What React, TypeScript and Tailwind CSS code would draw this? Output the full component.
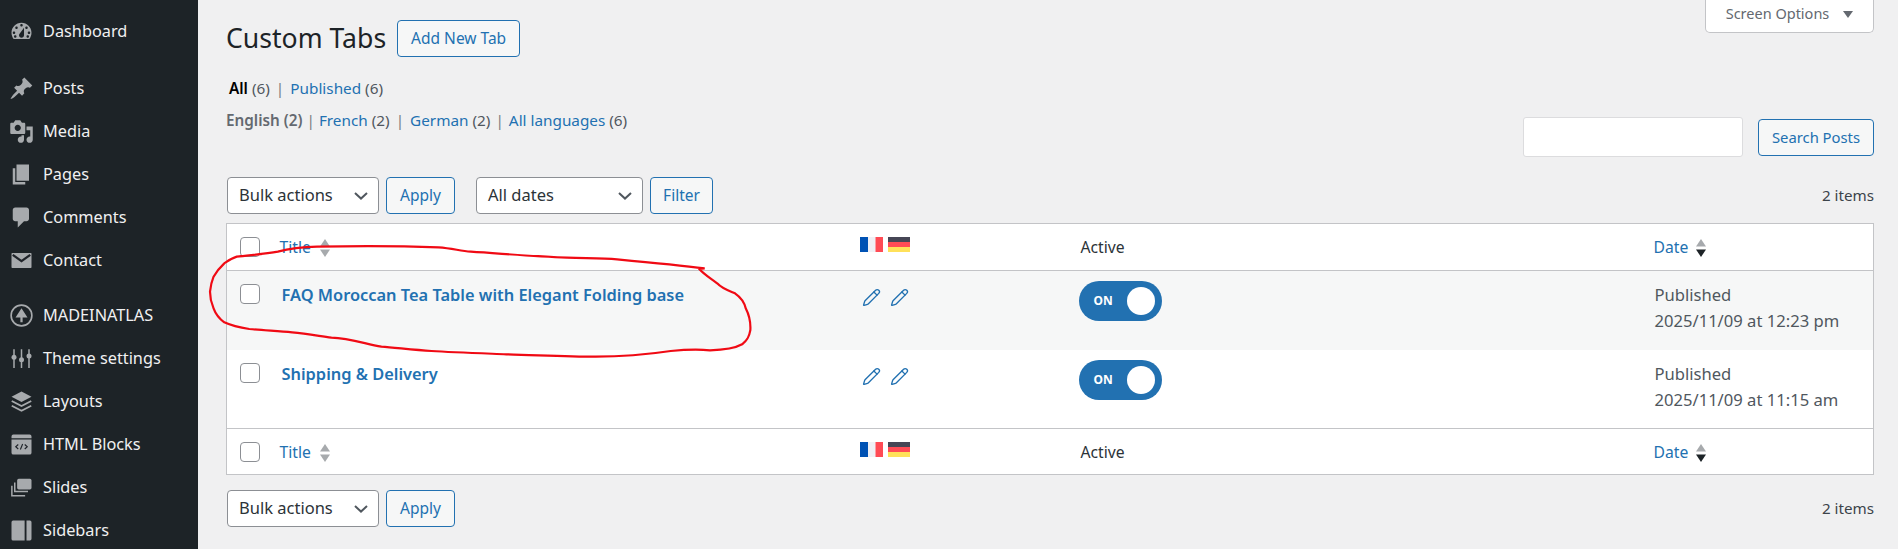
import { Pencil } from "lucide-react";
import type { ReactNode } from "react";

const ic = "w-[25px] h-[25px] shrink-0 fill-[#a7aaad]";

const Svg = ({ children }: { children: ReactNode }) => (
  <svg viewBox="0 0 20 20" className={ic}>{children}</svg>
);

const icons: Record<string, ReactNode> = {
  dashboard: <Svg><path fillRule="evenodd" d="M3.76 16h12.48c1.1-1.37 1.76-3.11 1.76-5 0-4.42-3.58-8-8-8s-8 3.58-8 8c0 1.89.66 3.63 1.76 5zM10 4c.55 0 1 .45 1 1s-.45 1-1 1-1-.45-1-1 .45-1 1-1zM6 6c.55 0 1 .45 1 1s-.45 1-1 1-1-.45-1-1 .45-1 1-1zm8 0c.55 0 1 .45 1 1s-.45 1-1 1-1-.45-1-1 .45-1 1-1zm-5.37 5.55L12 7v6c0 1.1-.9 2-2 2s-2-.9-2-2c0-.57.24-1.08.63-1.45zM4 10c.55 0 1 .45 1 1s-.45 1-1 1-1-.45-1-1 .45-1 1-1zm12 0c.55 0 1 .45 1 1s-.45 1-1 1-1-.45-1-1 .45-1 1-1zM5 13c.55 0 1 .45 1 1s-.45 1-1 1-1-.45-1-1 .45-1 1-1zm10 0c.55 0 1 .45 1 1s-.45 1-1 1-1-.45-1-1 .45-1 1-1z" /></Svg>,
  posts: <Svg><path d="M10.44 3.02l1.82-1.82 6.36 6.35-1.83 1.82c-1.05-.68-2.48-.57-3.41.36l-.75.75c-.92.93-1.04 2.35-.35 3.41l-1.83 1.82-2.41-2.41-2.8 2.79c-.42.42-3.38 2.71-3.8 2.29s1.86-3.39 2.28-3.81l2.79-2.79L4.1 9.36l1.83-1.82c1.05.69 2.48.57 3.4-.36l.75-.75c.93-.92 1.05-2.35.36-3.41z" /></Svg>,
  media: <Svg><path fillRule="evenodd" d="M13 11V4c0-.55-.45-1-1-1h-1.67L9 1H5L3.67 3H2c-.55 0-1 .45-1 1v7c0 .55.45 1 1 1h10c.55 0 1-.45 1-1zM7 4.5c1.38 0 2.5 1.12 2.5 2.5S8.38 9.5 7 9.5 4.5 8.38 4.5 7 5.62 4.5 7 4.5zM14 6h5v10.5c0 1.38-1.12 2.5-2.5 2.5S14 17.88 14 16.5s1.12-2.5 2.5-2.5c.17 0 .34.02.5.05V9h-3V6zm-4 8.05V13h2v3.5c0 1.38-1.12 2.5-2.5 2.5S7 17.88 7 16.5 8.12 14 9.5 14c.17 0 .34.02.5.05z" /></Svg>,
  pages: <Svg><path d="M6 15V2h10v13H6zm-1 1h8v2H3V5h2v11z" /></Svg>,
  comments: <Svg><path d="M5 2h9c1.1 0 2 .9 2 2v7c0 1.1-.9 2-2 2h-2l-5 5v-5H5c-1.1 0-2-.9-2-2V4c0-1.1.9-2 2-2z" /></Svg>,
  contact: (
    <Svg>
      <rect x="2" y="4" width="16" height="12" rx="0.6" />
      <path d="M3 5.5l7 5 7-5" fill="none" stroke="#1f2329" strokeWidth="1.8" />
    </Svg>
  ),
  atlas: (
    <Svg>
      <circle cx="10" cy="10" r="8.3" fill="none" stroke="#a7aaad" strokeWidth="1.3" />
      <path d="M10 4.2l4.8 7.4h-3.9v3.8H9.1v-3.8H5.2z" />
    </Svg>
  ),
  settings: (
    <Svg>
      <path d="M4 2.5v15M10 2.5v15M16 2.5v15" stroke="#a7aaad" strokeWidth="1.2" fill="none" />
      <circle cx="4" cy="9" r="2" />
      <circle cx="10" cy="11" r="2" />
      <circle cx="16" cy="8" r="2" />
    </Svg>
  ),
  layouts: (
    <Svg>
      <path d="M10 2l8 4.2-8 4.2-8-4.2z" />
      <path d="M2.2 9.6L10 13.6l7.8-4M2.2 13.4L10 17.4l7.8-4" fill="none" stroke="#a7aaad" strokeWidth="1.5" />
    </Svg>
  ),
  html: (
    <Svg>
      <path fillRule="evenodd" d="M3.5 2h13A1.5 1.5 0 0118 3.5V5H2V3.5A1.5 1.5 0 013.5 2zM2 6h16v10.5a1.5 1.5 0 01-1.5 1.5h-13A1.5 1.5 0 012 16.5z" />
      <path d="M7.4 10l-2 1.8 2 1.8M12.6 10l2 1.8-2 1.8M10.9 9.6l-1.8 4.4" fill="none" stroke="#1f2329" strokeWidth="0.9" />
    </Svg>
  ),
  slides: (
    <Svg>
      <rect x="6.5" y="3" width="11.5" height="8.5" rx="1.3" />
      <path d="M4.6 6v7.2h10.6M2.3 8.5v8h10.6" fill="none" stroke="#a7aaad" strokeWidth="1.2" />
    </Svg>
  ),
  sidebars: (
    <Svg>
      <path d="M3.3 2h9.2v16H3.3A1.3 1.3 0 012 16.7V3.3A1.3 1.3 0 013.3 2zM14 2h2.7A1.3 1.3 0 0118 3.3v13.4a1.3 1.3 0 01-1.3 1.3H14z" />
    </Svg>
  ),
};

const MenuItem = ({ icon, label }: { icon: string; label: string }) => (
  <div className="flex items-center h-[43px] pl-[9px] gap-[9px] text-[16.3px] text-[#f0f0f1] whitespace-nowrap">
    {icons[icon]}
    <span>{label}</span>
  </div>
);

const Chevron = () => (
  <svg viewBox="0 0 14 8" className="w-[14px] h-[8px] shrink-0" fill="none" stroke="#50575e" strokeWidth="2">
    <path d="M1 1l6 5.6L13 1" />
  </svg>
);

const SelectBox = ({ label, w }: { label: string; w: string }) => (
  <div className={`${w} h-[37px] flex items-center justify-between pl-[11px] pr-[10px] bg-white border border-[#8c8f94] rounded-[4px] text-[16.5px] text-[#2c3338]`}>
    <span>{label}</span>
    <Chevron />
  </div>
);

const Btn = ({ children, w, size = "text-[15.5px]" }: { children: ReactNode; w: string; size?: string }) => (
  <div className={`${w} h-[37px] flex items-center justify-center bg-[#f6f7f7] border border-[#2271b1] rounded-[4px] ${size} text-[#2271b1] whitespace-nowrap`}>
    {children}
  </div>
);

const Checkbox = () => (
  <div className="w-[20px] h-[20px] bg-white border border-[#8c8f94] rounded-[4px]" />
);

const Sort = ({ active }: { active?: boolean }) => (
  <svg viewBox="0 0 10 18" className="w-[10px] h-[18px] inline-block shrink-0">
    <path d="M5 0l5 7.5H0z" fill="#a7aaad" />
    <path d="M5 18l5-7.5H0z" fill={active ? "#1d2327" : "#a7aaad"} />
  </svg>
);

const Flags = () => (
  <div className="flex gap-[5px]">
    <svg viewBox="0 0 23 15" className="w-[23px] h-[15px]">
      <rect width="8" height="15" fill="#0052b4" />
      <rect x="8" width="7.5" height="15" fill="#f0f0f5" />
      <rect x="15.5" width="7.5" height="15" fill="#ff4b55" />
    </svg>
    <svg viewBox="0 0 22 15" className="w-[22px] h-[15px]">
      <rect width="22" height="5" fill="#464655" />
      <rect y="5" width="22" height="5" fill="#ff4b55" />
      <rect y="10" width="22" height="5" fill="#ffe15a" />
    </svg>
  </div>
);

const Toggle = () => (
  <div className="w-[83px] h-[40px] rounded-full bg-[#2271b1] flex items-center justify-between pl-[15px] pr-[7px]">
    <span className="text-[12px] font-bold text-white">ON</span>
    <span className="w-[28px] h-[28px] rounded-full bg-white" />
  </div>
);

const Pencils = () => (
  <div className="flex gap-[9px] pl-[2px]">
    <Pencil size={19} strokeWidth={1.7} color="#2271b1" />
    <Pencil size={19} strokeWidth={1.7} color="#2271b1" />
  </div>
);

const HeadRow = ({ foot }: { foot?: boolean }) => {
  const line = foot ? "" : "border-b border-[#c3c4c7]";
  return (
    <tr className={`${foot ? "h-[46px]" : "h-[47px]"} ${line} bg-white text-[15.7px]`}>
      <td className="pl-[13px] align-top pt-[13px]"><Checkbox /></td>
      <td className="pl-[9px] align-top pt-[12px]">
        <div className="flex items-center gap-[9px] text-[#2271b1]"><span>Title</span><Sort /></div>
      </td>
      <td className="pl-[11px] align-top pt-[13px]"><Flags /></td>
      <td className="pl-[11px] align-top pt-[12px] text-[#2c3338]">Active</td>
      <td className="pl-[9px] align-top pt-[12px]">
        <div className="flex items-center gap-[8px] text-[#2271b1]"><span>Date</span><Sort active /></div>
      </td>
    </tr>
  );
};

const Row = ({ title, time, alt }: { title: string; time: string; alt?: boolean }) => (
  <tr className={`h-[79px] ${alt ? "bg-[#f6f7f7]" : "bg-white"}`}>
    <td className="pl-[13px] align-top pt-[13px]"><Checkbox /></td>
    <td className="pl-[11px] align-top pt-[12px] text-[16.4px] font-semibold text-[#2271b1]">{title}</td>
    <td className="pl-[11px] align-top pt-[17px]"><Pencils /></td>
    <td className="pl-[9px] align-top pt-[10px]"><Toggle /></td>
    <td className="pl-[10px] align-top pt-[11px] text-[16.6px] leading-[26px] text-[#50575e]">
      Published
      <br />
      {time}
    </td>
  </tr>
);

const Scribble = () => (
  <svg
    viewBox="0 0 1568 450"
    preserveAspectRatio="none"
    className="absolute left-[210px] top-[215px] w-[560px] h-[150px] overflow-visible pointer-events-none"
    fill="none"
  >
    <path
      vectorEffect="non-scaling-stroke"
      stroke="#f00a14"
      strokeWidth="2.2"
      d="M300 95C400 93 560 94 640 97C680 100 700 108 730 110C820 116 900 124 1000 128C1060 130 1100 130 1140 133C1230 142 1310 150 1385 160L1370 162C1385 180 1400 188 1420 205C1435 222 1455 228 1470 235C1490 250 1497 265 1500 280C1512 305 1514 325 1513 345C1510 365 1505 375 1490 388C1470 400 1440 405 1400 406C1360 402 1330 404 1290 408C1240 416 1170 425 1080 425C1000 425 910 420 830 418C760 415 680 412 620 408C570 405 520 398 480 395C430 385 390 370 340 368C300 362 270 356 230 352C190 348 150 346 110 342C85 338 60 332 40 322C25 310 15 295 10 280C2 260 0 245 0 230C2 210 5 198 10 185C20 165 30 155 40 145C50 138 60 130 75 125C110 120 150 118 190 110C225 100 260 96 300 95Z"
    />
  </svg>
);

export default function App() {
  return (
    <div
      className="relative flex w-[1898px] h-[549px] overflow-hidden bg-[#f0f0f1] text-[15.5px] text-[#3c434a]"
      style={{ fontFamily: '"Noto Sans", sans-serif' }}
    >
      <aside className="w-[198px] shrink-0 bg-[#1d2327] pt-[10px]">
        <MenuItem icon="dashboard" label="Dashboard" />
        <div className="h-[14px]" />
        <MenuItem icon="posts" label="Posts" />
        <MenuItem icon="media" label="Media" />
        <MenuItem icon="pages" label="Pages" />
        <MenuItem icon="comments" label="Comments" />
        <MenuItem icon="contact" label="Contact" />
        <div className="h-[12px]" />
        <MenuItem icon="atlas" label="MADEINATLAS" />
        <MenuItem icon="settings" label="Theme settings" />
        <MenuItem icon="layouts" label="Layouts" />
        <MenuItem icon="html" label="HTML Blocks" />
        <MenuItem icon="slides" label="Slides" />
        <MenuItem icon="sidebars" label="Sidebars" />
      </aside>

      <main className="flex-1 min-w-0 pl-[28px] pr-[24px]">
        <div className="flex items-start justify-between">
          <div className="flex items-center gap-[11px] pt-[20px]">
            <h1 className="text-[26.6px] leading-[37px] text-[#1d2327]">Custom Tabs</h1>
            <Btn w="w-[123px]">Add New Tab</Btn>
          </div>
          <div className="w-[169px] h-[33px] pb-[4px] flex items-center justify-center gap-[14px] bg-white border border-t-0 border-[#c3c4c7] rounded-b-[5px] text-[14.5px] text-[#646970]">
            <span>Screen Options</span>
            <svg viewBox="0 0 10 7" className="w-[10px] h-[7px]"><path d="M0 0h10L5 7z" fill="#646970" /></svg>
          </div>
        </div>

        <div className="flex items-start justify-between">
          <div className="pt-[20px] text-[15.3px] leading-[22px] text-[#50575e]">
            <div className="pl-[3px]">
              <span className="font-semibold text-black">All</span> (6)
              <span className="text-[#787c82] mx-[6px]">|</span>
              <span className="text-[#2271b1]">Published</span> (6)
            </div>
            <div className="mt-[10px]">
              <span className="font-semibold text-[#646970]">English (2)</span>
              <span className="text-[#787c82] mx-[4px]">|</span>
              <span className="text-[#2271b1]">French</span> (2)
              <span className="text-[#787c82] mx-[6px]">|</span>
              <span className="text-[#2271b1]">German</span> (2)
              <span className="text-[#787c82] mx-[5px]">|</span>
              <span className="text-[#2271b1]">All languages</span> (6)
            </div>
          </div>
          <div className="flex items-center gap-[15px] mt-[60px]">
            <div className="w-[220px] h-[40px] bg-white border border-[#dcdcde] rounded-[3px]" />
            <Btn w="w-[116px]" size="text-[14.8px]">Search Posts</Btn>
          </div>
        </div>

        <div className="flex items-center justify-between mt-[20px] pl-[1px]">
          <div className="flex items-center">
            <SelectBox label="Bulk actions" w="w-[152px]" />
            <div className="ml-[7px]"><Btn w="w-[69px]">Apply</Btn></div>
            <div className="ml-[21px]"><SelectBox label="All dates" w="w-[167px]" /></div>
            <div className="ml-[7px]"><Btn w="w-[63px]">Filter</Btn></div>
          </div>
          <span className="text-[15.2px] text-[#3c434a]">2 items</span>
        </div>

        <table className="w-full mt-[9px] table-fixed border-collapse border border-[#c3c4c7]">
          <colgroup>
            <col className="w-[44px]" />
            <col className="w-[578px]" />
            <col className="w-[221px]" />
            <col className="w-[575px]" />
            <col />
          </colgroup>
          <thead><HeadRow /></thead>
          <tbody className="border-b border-[#c3c4c7]">
            <Row title="FAQ Moroccan Tea Table with Elegant Folding base" time="2025/11/09 at 12:23 pm" alt />
            <Row title="Shipping & Delivery" time="2025/11/09 at 11:15 am" />
          </tbody>
          <tfoot><HeadRow foot /></tfoot>
        </table>

        <div className="flex items-center justify-between mt-[15px] pl-[1px]">
          <div className="flex items-center">
            <SelectBox label="Bulk actions" w="w-[152px]" />
            <div className="ml-[7px]"><Btn w="w-[69px]">Apply</Btn></div>
          </div>
          <span className="text-[15.2px] text-[#3c434a]">2 items</span>
        </div>
      </main>

      <Scribble />
    </div>
  );
}
